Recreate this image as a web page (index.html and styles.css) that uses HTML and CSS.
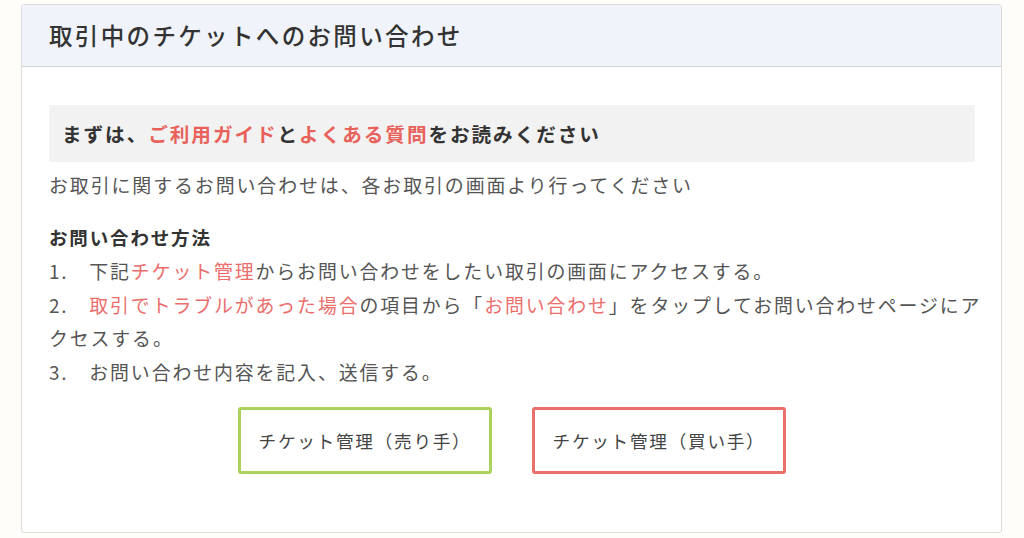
FILE: index.html
```html
<!DOCTYPE html>
<html lang="ja">
<head>
<meta charset="utf-8">
<link rel="stylesheet" href="styles.css">
</head>
<body>
<div class="page">
  <section class="card">
    <header class="card-head">
      <h2 class="card-title">取引中のチケットへのお問い合わせ</h2>
    </header>
    <div class="card-body">
      <div class="notice">まずは、<span class="link">ご利用ガイド</span>と<span class="link">よくある質問</span>をお読みください</div>
      <p class="lead">お取引に関するお問い合わせは、各お取引の画面より行ってください</p>
      <h3 class="sub">お問い合わせ方法</h3>
      <ol class="steps">
        <li>1.　下記<span class="link-light">チケット管理</span>からお問い合わせをしたい取引の画面にアクセスする。</li>
        <li>2.　<span class="link-light">取引でトラブルがあった場合</span>の項目から「<span class="link-light">お問い合わせ</span>」をタップしてお問い合わせページにアクセスする。</li>
        <li>3.　お問い合わせ内容を記入、送信する。</li>
      </ol>
      <div class="buttons">
        <a class="btn btn-seller">チケット管理（売り手）</a>
        <a class="btn btn-buyer">チケット管理（買い手）</a>
      </div>
    </div>
  </section>
</div>
</body>
</html>
```
FILE: styles.css
```css
* { box-sizing: border-box; }
html, body { margin: 0; padding: 0; }
body {
  background: #fffdf9;
  font-family: "Noto Sans CJK JP", "Noto Sans", sans-serif;
  color: #555;
  width: 1024px;
  height: 538px;
  overflow: hidden;
}
.page {
  padding: 4px 22px 0 21px;
}
.card {
  background: #fff;
  border: 1px solid #dcdcdc;
  border-radius: 3px;
  height: 529px;
}
.card-head {
  background: #f0f4fa;
  border-bottom: 1px solid #cfd3d8;
  height: 62px;
  display: flex;
  align-items: center;
  padding: 0 0 0 27px;
}
.card-title {
  margin: 0;
  font-size: 23.5px;
  font-weight: 500;
  letter-spacing: 0.1em;
  color: #333;
  line-height: 1;
}
.card-body {
  padding: 38px 26px 0 27px;
}
.notice {
  background: #f2f2f2;
  border-radius: 2px;
  height: 57px;
  padding: 0 13px;
  display: flex;
  align-items: center;
  font-size: 19.6px;
  font-weight: 700;
  letter-spacing: 0.1em;
  color: #333;
}
.link { color: #e8625b; }
.link-light { color: #eb6e6c; }
.lead {
  margin: 6px 0 0;
  font-size: 18.95px;
  line-height: 33.6px;
  letter-spacing: 0.1em;
  color: #555;
}
.sub {
  margin: 19px 0 0;
  font-size: 18.5px;
  font-weight: 700;
  line-height: 33.6px;
  letter-spacing: 0.1em;
  color: #333;
}
.steps {
  margin: 0 -8px 0 0;
  padding: 0;
  list-style: none;
  font-size: 18.9px;
  line-height: 33.6px;
  letter-spacing: 0.1em;
  color: #555;
}
.buttons {
  display: flex;
  justify-content: center;
  gap: 40px;
  margin-top: 18px;
}
.btn {
  width: 254px;
  height: 67px;
  border: 3px solid;
  border-radius: 3px;
  display: flex;
  align-items: center;
  justify-content: center;
  font-size: 17.6px;
  letter-spacing: 0.1em;
  color: #444;
  text-decoration: none;
}
.btn-seller { border-color: #a9d15c; }
.btn-buyer { border-color: #e8716b; }
```
